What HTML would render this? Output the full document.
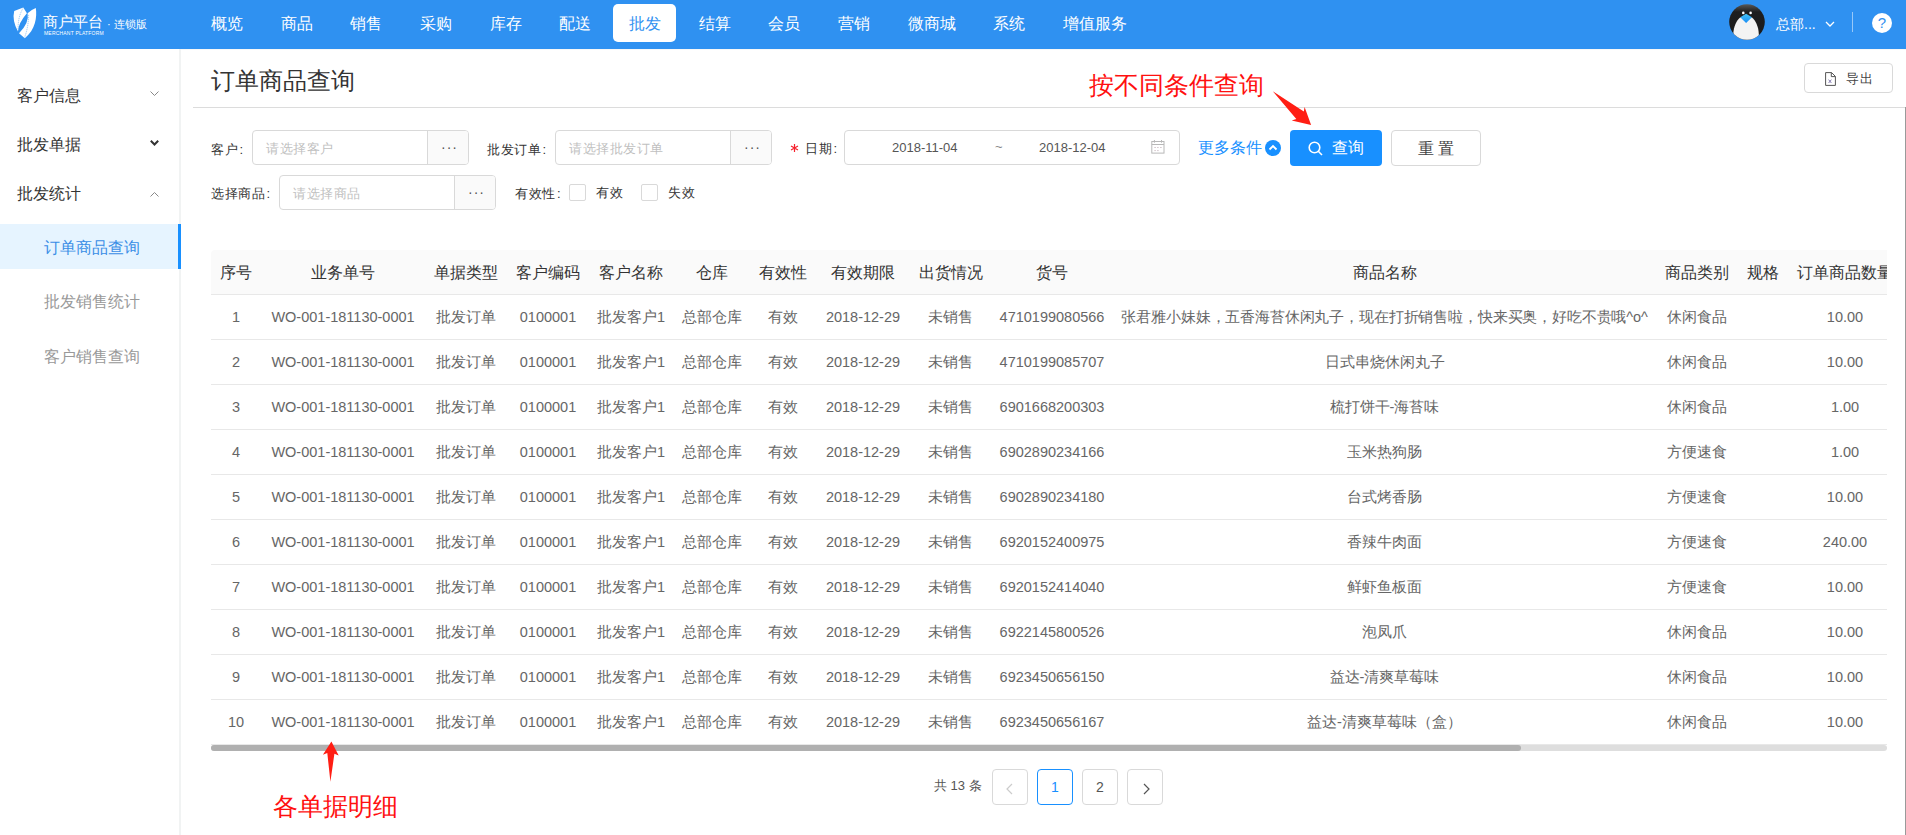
<!DOCTYPE html>
<html><head><meta charset="utf-8">
<style>
*{box-sizing:border-box;margin:0;padding:0}
html,body{width:1906px;height:835px;overflow:hidden;background:#fff}
body{font-family:"Liberation Sans",sans-serif;position:relative;color:#333}
.a{position:absolute;white-space:nowrap}
#hdr{position:absolute;left:0;top:0;width:1906px;height:49px;background:#2f91f1}
.nav{position:absolute;top:4px;height:38px;line-height:39px;font-size:16px;color:#fff;text-align:center}
.nav.on{background:#fff;color:#3191f1;border-radius:5px}
#side{position:absolute;left:0;top:49px;width:181px;height:786px;border-right:2px solid #f1f3f3}
.si{position:absolute;left:17px;font-size:16px;color:#333;line-height:20px}
.sub{position:absolute;left:0;width:179px;height:45px;line-height:47px;padding-left:44px;font-size:16px;color:#999}
.sub.on{background:#e6f4ff;color:#3a8ee6}
.lbl{font-size:13px;letter-spacing:0.5px;color:#333;line-height:16px}
.lbl i{font-style:normal;margin-left:1.5px}
.inp{position:absolute;height:35px;border:1px solid #d9d9d9;border-radius:4px;background:#fff;overflow:hidden}
.inp .ph{position:absolute;left:13px;top:1px;line-height:33px;font-size:13px;letter-spacing:0.5px;color:#bfbfbf}
.inp .add{position:absolute;right:0;top:0;bottom:0;width:41px;border-left:1px solid #d9d9d9;background:#fafafa;text-align:center;line-height:33px;color:#555;font-size:14px;letter-spacing:1px;padding-left:3px}
.cb{position:absolute;width:17px;height:17px;border:1px solid #d9d9d9;border-radius:2px;background:#fff}
.btn{position:absolute;border-radius:4px;text-align:center}
#tbl{position:absolute;left:211px;top:250px;width:1676px;height:495px;overflow:hidden}
.row{position:absolute;left:0;width:1700px;height:45px;border-bottom:1px solid #e8e8e8}
.c{position:absolute;top:0;height:44px;line-height:44px;text-align:center;white-space:nowrap;font-size:14.5px;color:#666}
.hd .c{font-size:16px;color:#333;line-height:46px}
.red{color:#ff1010}
</style></head><body>

<div id="hdr">
  <svg class="a" style="left:0;top:0" width="48" height="48" viewBox="0 0 48 48">
    <path d="M14.2 10.9 L23.3 7.4 L26.9 13.3 Q17.95 23.8 18 31.5 Q11.9 20.4 14.2 10.9 Z" fill="#fff"/>
    <path d="M35.8 8.1 C37.2 17 35.5 30 24.8 38.2 L19 33.2 Q29.5 22.95 27.6 13.3 Q31 10 35.8 8.1 Z" fill="#fff"/>
    <path d="M22.8 8.6 Q17.5 18 18.2 30.5 M28.6 14.8 Q28.5 27 24.6 37.3" stroke="#5aa6f2" stroke-width="0.6" fill="none" stroke-dasharray="1.2 0.8"/>
  </svg>
  <div class="a" style="left:43px;top:12px;font-size:15px;color:#fff;line-height:20px">商户平台</div>
  <div class="a" style="left:44px;top:30px;font-size:5px;color:#fff;line-height:6px;letter-spacing:0.2px">MERCHANT PLATFORM</div>
  <div class="a" style="left:107px;top:16px;font-size:11px;color:#fff;line-height:16px">· 连锁版</div>

  <div class="nav" style="left:195px;width:63px">概览</div>
  <div class="nav" style="left:265px;width:63px">商品</div>
  <div class="nav" style="left:334px;width:63px">销售</div>
  <div class="nav" style="left:404px;width:63px">采购</div>
  <div class="nav" style="left:474px;width:63px">库存</div>
  <div class="nav" style="left:543px;width:63px">配送</div>
  <div class="nav on" style="left:613px;width:63px">批发</div>
  <div class="nav" style="left:683px;width:63px">结算</div>
  <div class="nav" style="left:752px;width:63px">会员</div>
  <div class="nav" style="left:822px;width:63px">营销</div>
  <div class="nav" style="left:892px;width:80px">微商城</div>
  <div class="nav" style="left:977px;width:63px">系统</div>
  <div class="nav" style="left:1047px;width:96px">增值服务</div>

  <svg class="a" style="left:1729px;top:4px" width="36" height="36" viewBox="0 0 36 36">
    <defs><clipPath id="pc"><circle cx="18" cy="18" r="17.8"/></clipPath>
    <linearGradient id="pg" x1="0" y1="0" x2="0" y2="1"><stop offset="0" stop-color="#5a5a5a"/><stop offset="0.22" stop-color="#1e1e1e"/><stop offset="1" stop-color="#1a1a1a"/></linearGradient>
    <linearGradient id="bk" x1="0" y1="0" x2="0" y2="1"><stop offset="0" stop-color="#45c6f8"/><stop offset="1" stop-color="#1a8cf5"/></linearGradient></defs>
    <g clip-path="url(#pc)">
    <rect x="0" y="0" width="36" height="36" fill="url(#pg)"/>
    <path d="M11.2 13.4 C7.5 16.5 4.6 22 4.3 30 L4.3 37 L30 37 L29.8 30 C29.5 22 26.5 16.5 23 13.4 Z" fill="#f3f3f3"/>
    </g>
    <path d="M11.2 13.2 L17.1 9.7 L23 13.2 L17.1 18.9 Z" fill="url(#bk)"/>
    <circle cx="14.3" cy="8.9" r="1.3" fill="#fff"/>
    <circle cx="21.6" cy="8.9" r="1.3" fill="#fff"/>
  </svg>
  <div class="a" style="left:1776px;top:15px;font-size:14px;color:#fff;line-height:18px">总部...</div>
  <svg class="a" style="left:1825px;top:20px" width="10" height="8" viewBox="0 0 10 8"><path d="M1 2 L5 6 L9 2" stroke="#fff" stroke-width="1.3" fill="none"/></svg>
  <div class="a" style="left:1852px;top:12px;width:1px;height:20px;background:rgba(255,255,255,0.5)"></div>
  <div class="a" style="left:1872px;top:13px;width:20px;height:20px;border-radius:50%;background:#fff;color:#3191f1;font-size:15px;line-height:20px;text-align:center">?</div>
</div>

<div id="side">
  <div class="si" style="top:37px">客户信息</div>
  <svg class="a" style="left:150px;top:42px" width="9" height="6" viewBox="0 0 9 6"><path d="M0.5 0.5 L4.5 4.5 L8.5 0.5" stroke="#888" stroke-width="1" fill="none"/></svg>
  <div class="si" style="top:86px">批发单据</div>
  <svg class="a" style="left:150px;top:91px" width="9" height="6" viewBox="0 0 9 6"><path d="M0.8 0.8 L4.5 4.5 L8.2 0.8" stroke="#333" stroke-width="2" fill="none"/></svg>
  <div class="si" style="top:135px">批发统计</div>
  <svg class="a" style="left:150px;top:142px" width="9" height="6" viewBox="0 0 9 6"><path d="M0.5 5.5 L4.5 1.5 L8.5 5.5" stroke="#888" stroke-width="1" fill="none"/></svg>
  <div class="sub on" style="top:175px">订单商品查询</div>
  <div class="a" style="left:178px;top:175px;width:3px;height:45px;background:#1890ff"></div>
  <div class="sub" style="top:229px">批发销售统计</div>
  <div class="sub" style="top:284px">客户销售查询</div>
</div>

<!-- content -->
<div class="a" style="left:211px;top:66px;font-size:24px;line-height:30px;color:#333">订单商品查询</div>
<div class="a" style="left:181px;top:49px;width:1725px;height:1px;background:#f8f8f8"></div>
<div class="a" style="left:193px;top:107px;width:1713px;height:1px;background:#dcdcdc"></div>
<div class="a" style="left:1905px;top:107px;width:1px;height:728px;background:#9a9a9a"></div>

<div class="btn" style="left:1804px;top:63px;width:89px;height:30px;border:1px solid #d9d9d9;font-size:13px;line-height:28px;color:#333">
  <svg class="a" style="left:20px;top:8px" width="12" height="15" viewBox="0 0 12 15"><path d="M0.6 0.6 H6.6 L10.4 4.4 V13.4 H0.6 Z M6.3 0.6 V4.6 H10.4" stroke="#555" stroke-width="1" fill="none"/><path d="M3.6 7.6 L6.4 11 M6.4 7.6 L3.6 11" stroke="#6a5fa0" stroke-width="0.8"/></svg>
  <span class="a" style="left:41px;top:1px;letter-spacing:0.5px;color:#444">导出</span>
</div>

<div id="ann1" class="a red" style="left:1089px;top:69px;font-size:25px;line-height:32px">按不同条件查询</div>

<!-- form row 1 -->
<div class="a lbl" style="left:211px;top:142px">客户<i>:</i></div>
<div class="inp" style="left:252px;top:130px;width:217px"><span class="ph">请选择客户</span><span class="add">···</span></div>
<div class="a lbl" style="left:487px;top:142px">批发订单<i>:</i></div>
<div class="inp" style="left:555px;top:130px;width:217px"><span class="ph">请选择批发订单</span><span class="add">···</span></div>
<svg class="a" style="left:790px;top:143px" width="9" height="10" viewBox="0 0 9 10"><path d="M4.5 1 V9 M1 3 L8 7 M1 7 L8 3" stroke="#f5222d" stroke-width="1.2"/></svg><div class="a lbl" style="left:805px;top:141px">日期<i>:</i></div>
<div class="inp" style="left:844px;top:130px;width:336px">
  <span class="a" style="left:47px;top:0;line-height:33px;font-size:13px;color:#555">2018-11-04</span>
  <span class="a" style="left:150px;top:0;line-height:31px;font-size:13px;color:#888">~</span>
  <span class="a" style="left:194px;top:0;line-height:33px;font-size:13px;color:#555">2018-12-04</span>
  <svg class="a" style="left:306px;top:9px" width="15" height="15" viewBox="0 0 15 15"><rect x="0.8" y="1.5" width="12.2" height="11.6" fill="none" stroke="#b8b8b8"/><path d="M0.8 4.5 H13 M3.4 0 V2.7 M10.5 0 V2.7" stroke="#b8b8b8"/><path d="M3.4 7.5 H4.8 M6.2 7.5 H7.6 M9.2 7.5 H10.6 M3.4 10.6 H4.8 M6.2 10.6 H7.6" stroke="#c8b8c0" stroke-width="0.9"/></svg>
</div>
<div class="a" style="left:1198px;top:138px;font-size:15.5px;line-height:20px;color:#1890ff">更多条件</div>
<div class="a" style="left:1265px;top:140px;width:16px;height:16px;border-radius:50%;background:#1890ff"></div>
<svg class="a" style="left:1265px;top:140px" width="16" height="16" viewBox="0 0 16 16"><path d="M4.5 9.5 L8 6 L11.5 9.5" stroke="#fff" stroke-width="1.8" fill="none"/></svg>
<div class="btn" style="left:1290px;top:130px;width:92px;height:36px;background:#1890ff;color:#fff;font-size:16px;line-height:36px">
  <svg class="a" style="left:18px;top:11px" width="16" height="15" viewBox="0 0 16 15"><circle cx="6.5" cy="6.5" r="5.3" stroke="#fff" stroke-width="1.6" fill="none"/><path d="M10.3 10.3 L14 14" stroke="#fff" stroke-width="1.6"/></svg>
  <span class="a" style="left:42px;top:0">查询</span>
</div>
<div class="btn" style="left:1391px;top:130px;width:90px;height:36px;border:1px solid #d9d9d9;color:#333;font-size:16px;line-height:36px;letter-spacing:4px;padding-left:4px;color:#444">重置</div>

<!-- form row 2 -->
<div class="a lbl" style="left:211px;top:186px">选择商品<i>:</i></div>
<div class="inp" style="left:279px;top:175px;width:217px"><span class="ph">请选择商品</span><span class="add">···</span></div>
<div class="a lbl" style="left:515px;top:186px">有效性<i>:</i></div>
<div class="cb" style="left:569px;top:184px"></div>
<div class="a lbl" style="left:596px;top:185px">有效</div>
<div class="cb" style="left:641px;top:184px"></div>
<div class="a lbl" style="left:668px;top:185px">失效</div>

<!-- table -->
<div id="tbl">
<div class="row hd" style="top:0;height:45px;background:#fafafa;border-radius:4px 4px 0 0"><div class="c" style="left:0px;width:50px">序号</div><div class="c" style="left:50px;width:164px">业务单号</div><div class="c" style="left:214px;width:82px">单据类型</div><div class="c" style="left:296px;width:82px">客户编码</div><div class="c" style="left:378px;width:84px">客户名称</div><div class="c" style="left:462px;width:77px">仓库</div><div class="c" style="left:539px;width:66px">有效性</div><div class="c" style="left:605px;width:94px">有效期限</div><div class="c" style="left:699px;width:81px">出货情况</div><div class="c" style="left:780px;width:122px">货号</div><div class="c" style="left:902px;width:543px">商品名称</div><div class="c" style="left:1445px;width:82px">商品类别</div><div class="c" style="left:1527px;width:50px">规格</div><div class="c" style="left:1577px;width:114px">订单商品数量</div></div>
<div class="row" style="top:45px"><div class="c" style="left:0px;width:50px">1</div><div class="c" style="left:50px;width:164px">WO-001-181130-0001</div><div class="c" style="left:214px;width:82px">批发订单</div><div class="c" style="left:296px;width:82px">0100001</div><div class="c" style="left:378px;width:84px">批发客户1</div><div class="c" style="left:462px;width:77px">总部仓库</div><div class="c" style="left:539px;width:66px">有效</div><div class="c" style="left:605px;width:94px">2018-12-29</div><div class="c" style="left:699px;width:81px">未销售</div><div class="c" style="left:780px;width:122px">4710199080566</div><div class="c" style="left:902px;width:543px"><span style="letter-spacing:-0.15px">张君雅小妹妹，五香海苔休闲丸子，现在打折销售啦，快来买奥，好吃不贵哦^o^</span></div><div class="c" style="left:1445px;width:82px">休闲食品</div><div class="c" style="left:1527px;width:50px"></div><div class="c" style="left:1577px;width:114px">10.00</div></div>
<div class="row" style="top:90px"><div class="c" style="left:0px;width:50px">2</div><div class="c" style="left:50px;width:164px">WO-001-181130-0001</div><div class="c" style="left:214px;width:82px">批发订单</div><div class="c" style="left:296px;width:82px">0100001</div><div class="c" style="left:378px;width:84px">批发客户1</div><div class="c" style="left:462px;width:77px">总部仓库</div><div class="c" style="left:539px;width:66px">有效</div><div class="c" style="left:605px;width:94px">2018-12-29</div><div class="c" style="left:699px;width:81px">未销售</div><div class="c" style="left:780px;width:122px">4710199085707</div><div class="c" style="left:902px;width:543px">日式串烧休闲丸子</div><div class="c" style="left:1445px;width:82px">休闲食品</div><div class="c" style="left:1527px;width:50px"></div><div class="c" style="left:1577px;width:114px">10.00</div></div>
<div class="row" style="top:135px"><div class="c" style="left:0px;width:50px">3</div><div class="c" style="left:50px;width:164px">WO-001-181130-0001</div><div class="c" style="left:214px;width:82px">批发订单</div><div class="c" style="left:296px;width:82px">0100001</div><div class="c" style="left:378px;width:84px">批发客户1</div><div class="c" style="left:462px;width:77px">总部仓库</div><div class="c" style="left:539px;width:66px">有效</div><div class="c" style="left:605px;width:94px">2018-12-29</div><div class="c" style="left:699px;width:81px">未销售</div><div class="c" style="left:780px;width:122px">6901668200303</div><div class="c" style="left:902px;width:543px">梳打饼干-海苔味</div><div class="c" style="left:1445px;width:82px">休闲食品</div><div class="c" style="left:1527px;width:50px"></div><div class="c" style="left:1577px;width:114px">1.00</div></div>
<div class="row" style="top:180px"><div class="c" style="left:0px;width:50px">4</div><div class="c" style="left:50px;width:164px">WO-001-181130-0001</div><div class="c" style="left:214px;width:82px">批发订单</div><div class="c" style="left:296px;width:82px">0100001</div><div class="c" style="left:378px;width:84px">批发客户1</div><div class="c" style="left:462px;width:77px">总部仓库</div><div class="c" style="left:539px;width:66px">有效</div><div class="c" style="left:605px;width:94px">2018-12-29</div><div class="c" style="left:699px;width:81px">未销售</div><div class="c" style="left:780px;width:122px">6902890234166</div><div class="c" style="left:902px;width:543px">玉米热狗肠</div><div class="c" style="left:1445px;width:82px">方便速食</div><div class="c" style="left:1527px;width:50px"></div><div class="c" style="left:1577px;width:114px">1.00</div></div>
<div class="row" style="top:225px"><div class="c" style="left:0px;width:50px">5</div><div class="c" style="left:50px;width:164px">WO-001-181130-0001</div><div class="c" style="left:214px;width:82px">批发订单</div><div class="c" style="left:296px;width:82px">0100001</div><div class="c" style="left:378px;width:84px">批发客户1</div><div class="c" style="left:462px;width:77px">总部仓库</div><div class="c" style="left:539px;width:66px">有效</div><div class="c" style="left:605px;width:94px">2018-12-29</div><div class="c" style="left:699px;width:81px">未销售</div><div class="c" style="left:780px;width:122px">6902890234180</div><div class="c" style="left:902px;width:543px">台式烤香肠</div><div class="c" style="left:1445px;width:82px">方便速食</div><div class="c" style="left:1527px;width:50px"></div><div class="c" style="left:1577px;width:114px">10.00</div></div>
<div class="row" style="top:270px"><div class="c" style="left:0px;width:50px">6</div><div class="c" style="left:50px;width:164px">WO-001-181130-0001</div><div class="c" style="left:214px;width:82px">批发订单</div><div class="c" style="left:296px;width:82px">0100001</div><div class="c" style="left:378px;width:84px">批发客户1</div><div class="c" style="left:462px;width:77px">总部仓库</div><div class="c" style="left:539px;width:66px">有效</div><div class="c" style="left:605px;width:94px">2018-12-29</div><div class="c" style="left:699px;width:81px">未销售</div><div class="c" style="left:780px;width:122px">6920152400975</div><div class="c" style="left:902px;width:543px">香辣牛肉面</div><div class="c" style="left:1445px;width:82px">方便速食</div><div class="c" style="left:1527px;width:50px"></div><div class="c" style="left:1577px;width:114px">240.00</div></div>
<div class="row" style="top:315px"><div class="c" style="left:0px;width:50px">7</div><div class="c" style="left:50px;width:164px">WO-001-181130-0001</div><div class="c" style="left:214px;width:82px">批发订单</div><div class="c" style="left:296px;width:82px">0100001</div><div class="c" style="left:378px;width:84px">批发客户1</div><div class="c" style="left:462px;width:77px">总部仓库</div><div class="c" style="left:539px;width:66px">有效</div><div class="c" style="left:605px;width:94px">2018-12-29</div><div class="c" style="left:699px;width:81px">未销售</div><div class="c" style="left:780px;width:122px">6920152414040</div><div class="c" style="left:902px;width:543px">鲜虾鱼板面</div><div class="c" style="left:1445px;width:82px">方便速食</div><div class="c" style="left:1527px;width:50px"></div><div class="c" style="left:1577px;width:114px">10.00</div></div>
<div class="row" style="top:360px"><div class="c" style="left:0px;width:50px">8</div><div class="c" style="left:50px;width:164px">WO-001-181130-0001</div><div class="c" style="left:214px;width:82px">批发订单</div><div class="c" style="left:296px;width:82px">0100001</div><div class="c" style="left:378px;width:84px">批发客户1</div><div class="c" style="left:462px;width:77px">总部仓库</div><div class="c" style="left:539px;width:66px">有效</div><div class="c" style="left:605px;width:94px">2018-12-29</div><div class="c" style="left:699px;width:81px">未销售</div><div class="c" style="left:780px;width:122px">6922145800526</div><div class="c" style="left:902px;width:543px">泡凤爪</div><div class="c" style="left:1445px;width:82px">休闲食品</div><div class="c" style="left:1527px;width:50px"></div><div class="c" style="left:1577px;width:114px">10.00</div></div>
<div class="row" style="top:405px"><div class="c" style="left:0px;width:50px">9</div><div class="c" style="left:50px;width:164px">WO-001-181130-0001</div><div class="c" style="left:214px;width:82px">批发订单</div><div class="c" style="left:296px;width:82px">0100001</div><div class="c" style="left:378px;width:84px">批发客户1</div><div class="c" style="left:462px;width:77px">总部仓库</div><div class="c" style="left:539px;width:66px">有效</div><div class="c" style="left:605px;width:94px">2018-12-29</div><div class="c" style="left:699px;width:81px">未销售</div><div class="c" style="left:780px;width:122px">6923450656150</div><div class="c" style="left:902px;width:543px">益达-清爽草莓味</div><div class="c" style="left:1445px;width:82px">休闲食品</div><div class="c" style="left:1527px;width:50px"></div><div class="c" style="left:1577px;width:114px">10.00</div></div>
<div class="row" style="top:450px"><div class="c" style="left:0px;width:50px">10</div><div class="c" style="left:50px;width:164px">WO-001-181130-0001</div><div class="c" style="left:214px;width:82px">批发订单</div><div class="c" style="left:296px;width:82px">0100001</div><div class="c" style="left:378px;width:84px">批发客户1</div><div class="c" style="left:462px;width:77px">总部仓库</div><div class="c" style="left:539px;width:66px">有效</div><div class="c" style="left:605px;width:94px">2018-12-29</div><div class="c" style="left:699px;width:81px">未销售</div><div class="c" style="left:780px;width:122px">6923450656167</div><div class="c" style="left:902px;width:543px">益达-清爽草莓味（盒）</div><div class="c" style="left:1445px;width:82px">休闲食品</div><div class="c" style="left:1527px;width:50px"></div><div class="c" style="left:1577px;width:114px">10.00</div></div>
</div><!--/tbl-->

<!-- scrollbar -->
<div class="a" style="left:211px;top:745px;width:1676px;height:6px;border-radius:3px;background:#dedede"></div>
<div class="a" style="left:211px;top:745px;width:1310px;height:6px;border-radius:3px;background:#b0b0b0"></div>

<!-- pagination -->
<div class="a" style="left:934px;top:778px;font-size:13px;line-height:16px;color:#555">共 13 条</div>
<div class="btn" style="left:992px;top:769px;width:36px;height:36px;border:1px solid #d9d9d9"><svg class="a" style="left:12px;top:12.5px" width="10" height="12" viewBox="0 0 10 12"><path d="M7 1 L2 6 L7 11" stroke="#ccc" stroke-width="1.2" fill="none"/></svg></div>
<div class="btn" style="left:1037px;top:769px;width:36px;height:36px;border:1px solid #1890ff;color:#1890ff;font-size:14px;line-height:34px">1</div>
<div class="btn" style="left:1082px;top:769px;width:36px;height:36px;border:1px solid #d9d9d9;color:#555;font-size:14px;line-height:34px">2</div>
<div class="btn" style="left:1127px;top:769px;width:36px;height:36px;border:1px solid #d9d9d9"><svg class="a" style="left:13px;top:12.5px" width="10" height="12" viewBox="0 0 10 12"><path d="M3 1 L8 6 L3 11" stroke="#555" stroke-width="1.2" fill="none"/></svg></div>

<div class="a red" style="left:273px;top:790px;font-size:25px;line-height:32px">各单据明细</div>

<svg class="a" style="left:0;top:0" width="1906" height="835" viewBox="0 0 1906 835">
<path d="M1272.8 91.2 L1303.8 111.4 L1304.6 107.1 L1311.1 125.1 L1291.7 120.6 L1296.3 118.9 Z" fill="#ff1e14"/>
<path d="M331.4 741.6 L338.7 755.4 L334.4 753.8 L330.4 781.8 L327.3 753.1 L322.9 754.8 Z" fill="#ff1e14"/>
</svg>
</body></html>
